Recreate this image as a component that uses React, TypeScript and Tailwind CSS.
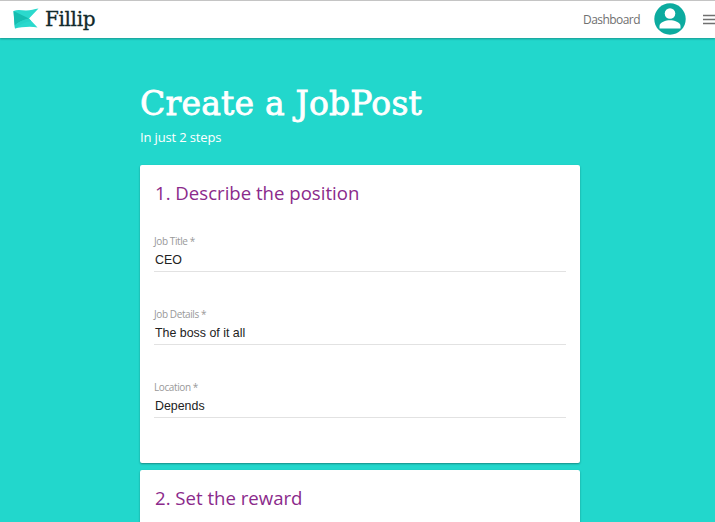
interface Field {
  label: string;
  value: string;
}

const fields: Field[] = [
  { label: "Job Title *", value: "CEO" },
  { label: "Job Details *", value: "The boss of it all" },
  { label: "Location *", value: "Depends" },
];

function Logo() {
  return (
    <div className="-mt-[2px] flex items-center">
      <svg width="26" height="22" viewBox="0 0 26 22" className="shrink-0">
        <path d="M0.500 3C5 1 9 2.500 13 2.500C18 2.500 21 1 25.500 0.500L16 10.500L24.500 19.500C18 18 8 19 2 20.500Z" fill="#2bd9cd" />
        <path d="M0.500 3L16 10.500C10 12 5 14 1.500 17.500Z" fill="#16bdb0" />
        <path d="M1.500 17.500C5 14 10 12 16 10.500L18 13C12 14 6 17 2 20.500Z" fill="#27d3c7" />
      </svg>
      <span className="ml-[6px] font-['DejaVu_Serif',serif] text-[20px] leading-6 tracking-[-0.35px] text-[#10292b] [-webkit-text-stroke:0.3px_#10292b]">
        Fillip
      </span>
    </div>
  );
}

function Header() {
  return (
    <header className="relative flex h-[38px] items-center justify-between border-t border-[#c4c4c4] bg-white pl-[13px] shadow-[0_1px_2px_rgba(0,0,0,0.3)]">
      <Logo />
      <nav className="flex items-center">
        <a className="text-[12px] leading-4 tracking-[-0.55px] text-[#707070]">Dashboard</a>
        <svg width="32" height="32" viewBox="0 0 32 32" className="-mt-px ml-[14px]">
          <circle cx="16" cy="16" r="15.7" fill="#0cab9f" />
          <circle cx="16" cy="10.5" r="5.3" fill="#fff" />
          <path d="M5.500 25.500V23C5.500 19.200 12 17.300 16 17.300S26.500 19.200 26.500 23V25.500Z" fill="#fff" />
        </svg>
        <svg width="12" height="12" viewBox="0 0 12 12" className="ml-[17px]">
          <path d="M0 1.500H12M0 5.500H12M0 9.500H12" stroke="#707070" strokeWidth="1.7" />
        </svg>
      </nav>
    </header>
  );
}

function TextField({ label, value }: Field) {
  return (
    <div className="h-[73px]">
      <div className="whitespace-nowrap text-[10px] leading-[14px] tracking-[-0.4px] text-[#999]">
        {label}
      </div>
      <div className="flex h-[24px] items-center border-b border-[#e2e2e2] pt-[2px] pl-px font-['Liberation_Sans',sans-serif] text-[12.4px] text-[#222]">
        {value}
      </div>
    </div>
  );
}

export default function App() {
  return (
    <div className="h-[522px] w-[715px] overflow-hidden bg-[#22d7cc] font-['Open_Sans',sans-serif]">
      <Header />
      <main className="ml-[140px] w-[440px] pt-[43px]">
        <h1 className="whitespace-nowrap font-['DejaVu_Serif',serif] text-[33px] leading-[46px] tracking-[0.2px] text-white [-webkit-text-stroke:0.8px_#fff]">
          Create a JobPost
        </h1>
        <p className="mt-px text-[13px] leading-[18px] tracking-[-0.15px] text-white">In just 2 steps</p>

        <section className="mt-[19px] h-[298px] rounded-[2px] bg-white px-[14px] pt-[14px] shadow-[0_1px_2px_rgba(0,0,0,0.35)]">
          <h2 className="mb-[27px] pl-[1px] text-[18.6px] leading-7 text-[#8b2a8b]">
            1. Describe the position
          </h2>
          {fields.map((field) => (
            <TextField key={field.label} {...field} />
          ))}
        </section>

        <section className="mt-[7px] h-[120px] rounded-[2px] bg-white px-[14px] pt-[14px] shadow-[0_1px_2px_rgba(0,0,0,0.35)]">
          <h2 className="pl-[1px] text-[18.6px] leading-7 text-[#8b2a8b]">2. Set the reward</h2>
        </section>
      </main>
    </div>
  );
}
